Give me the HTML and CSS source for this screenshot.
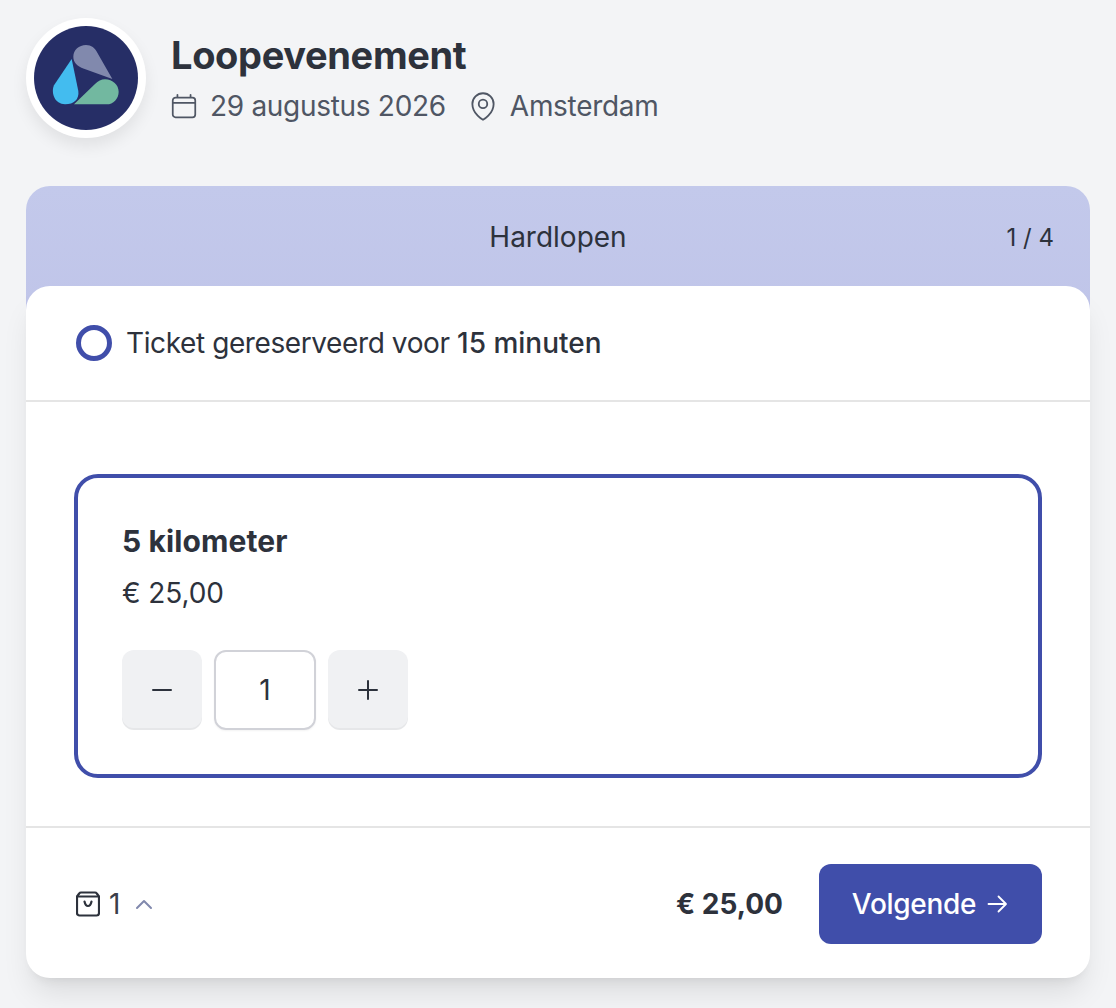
FILE: index.html
```html
<!DOCTYPE html>
<html lang="nl">

<head>
    <meta charset="UTF-8">
    <meta name="viewport" content="width=device-width, initial-scale=1.0">
    <title>Loopevenement</title>
    <link rel="stylesheet" href="styles.css">
</head>

<body>
    <header class="event">
        <div class="logo">
            <svg viewBox="0 0 312 312" width="104" height="104">
                <circle cx="156" cy="156" r="156" fill="#262e66" />
                <path d="M113 99 L60 178 C50 200 62 235 93 235 C120 235 136 220 133 195 Z" fill="#43bcef" />
                <path d="M235 159 L150 128 C128 120 118 108 118 92 C118 72 135 57 156 57 C172 57 183 66 190 80 Z" fill="#8189ad" />
                <path d="M120 235 L183 174 C192 165 202 160 213 160 C236 160 254 177 254 197 C254 218 238 235 218 235 Z" fill="#72b8a0" />
            </svg>
        </div>
        <div>
            <h1 class="event-title">Loopevenement</h1>
            <div class="event-meta">
                <svg class="icon-date" viewBox="0 0 24 24" width="30" height="32" fill="none" stroke="currentColor" stroke-width="1.400" stroke-linecap="round" stroke-linejoin="round">
                    <path d="M6.750 3v2.250M17.250 3v2.250M3 9.500h18M5.250 5.250h13.500A2.250 2.250 0 0 1 21 7.500v11.250A2.250 2.250 0 0 1 18.750 21H5.250A2.250 2.250 0 0 1 3 18.750V7.500a2.250 2.250 0 0 1 2.250-2.250Z" />
                </svg>
                <span class="meta-date">29 augustus 2026</span>
                <svg class="icon-place" viewBox="0 0 24 24" width="34" height="34" fill="none" stroke="currentColor" stroke-width="1.300" stroke-linecap="round" stroke-linejoin="round">
                    <path d="M15 10.500a3 3 0 1 1-6 0 3 3 0 0 1 6 0Z" />
                    <path d="M19.500 10.500c0 7.140-7.500 11.250-7.500 11.250S4.500 17.640 4.500 10.500a7.500 7.500 0 1 1 15 0Z" />
                </svg>
                <span>Amsterdam</span>
            </div>
        </div>
    </header>

    <main class="card">
        <div class="card-head">
            <span class="head-side"></span>
            <span class="head-title">Hardlopen</span>
            <span class="head-side head-step">1 / 4</span>
        </div>
        <div class="panel">
            <div class="timer">
                <span class="timer-ring"></span>
                <span class="timer-text">Ticket gereserveerd voor <span class="timer-time">15 minuten</span></span>
            </div>
            <div class="tickets">
                <div class="ticket">
                    <div class="ticket-name">5 kilometer</div>
                    <div class="ticket-price">€ 25,00</div>
                    <div class="qty">
                        <div class="qty-btn">
                            <svg viewBox="0 0 24 24" width="24" height="24" fill="none" stroke="#2d323c" stroke-width="2" stroke-linecap="round"><path d="M3 12h18" /></svg>
                        </div>
                        <div class="qty-input">1</div>
                        <div class="qty-btn">
                            <svg viewBox="0 0 24 24" width="24" height="24" fill="none" stroke="#2d323c" stroke-width="2" stroke-linecap="round"><path d="M3 12h18M12 3v18" /></svg>
                        </div>
                    </div>
                </div>
            </div>
            <div class="footer">
                <div class="cart">
                    <svg viewBox="0 0 24 28" width="24" height="28" fill="none" stroke="#2d323c" stroke-width="2.200" stroke-linecap="round" stroke-linejoin="round">
                        <path d="M5 2.500h14c.8 0 1.400.4 1.800 1L23 6.500v16.500a2.500 2.500 0 0 1-2.500 2.500h-17A2.500 2.500 0 0 1 1 23V6.500l2.200-3c.4-.6 1-1 1.800-1Z" />
                        <path d="M1.500 6.500h21M8.500 11.500c.6 3 2 4.500 3.500 4.500s2.900-1.500 3.500-4.500" />
                    </svg>
                    <span class="cart-count">1</span>
                    <svg class="cart-arrow" viewBox="0 0 18 12" width="18" height="12" fill="none" stroke="#8189ad" stroke-width="2" stroke-linecap="round" stroke-linejoin="round">
                        <path d="M2 10l7-7 7 7" />
                    </svg>
                </div>
                <div class="total">€ 25,00</div>
                <div class="next">
                    Volgende
                    <svg viewBox="0 0 24 24" width="24" height="24" fill="none" stroke="#fff" stroke-width="1.800" stroke-linecap="round" stroke-linejoin="round">
                        <path d="M3.500 12h17M13.500 4.500 21 12l-7.500 7.500" />
                    </svg>
                </div>
            </div>
        </div>
    </main>
</body>

</html>
```

FILE: styles.css
```css
* {
    box-sizing: border-box;
}

body {
    margin: 0;
    padding: 18px 26px 30px;
    background-color: #f3f4f6;
    color: #2d323c;
    font-family: Inter, "Liberation Sans", sans-serif;
}

.event {
    display: flex;
    gap: 25px;
    margin-bottom: 48px;
}

.logo {
    width: 120px;
    height: 120px;
    flex-shrink: 0;
    border-radius: 50%;
    background-color: white;
    display: flex;
    align-items: center;
    justify-content: center;
    box-shadow: 0 8px 16px rgba(0, 0, 0, 0.08);
}

.event-title {
    margin: 15px 0 0;
    font-size: 38px;
    line-height: 44px;
    font-weight: 700;
    letter-spacing: -0.35px;
}

.event-meta {
    display: flex;
    align-items: center;
    margin-top: 9px;
    color: #4f5664;
    font-size: 28px;
    line-height: 40px;
    letter-spacing: -0.3px;
}

.icon-date {
    margin-left: -2px;
    margin-right: 11px;
}

.meta-date {
    margin-right: 20px;
}

.icon-place {
    margin-right: 10px;
}

.card-head {
    height: 124px;
    padding: 0 36px 22px;
    display: flex;
    align-items: center;
    justify-content: space-between;
    background: linear-gradient(#c3c9eb, #c0c5e9);
    border-radius: 24px 24px 0 0;
}

.head-side {
    width: 100px;
}

.head-title {
    font-size: 28px;
    font-weight: 400;
}

.head-step {
    font-size: 24px;
    text-align: right;
}

.panel {
    position: relative;
    margin-top: -24px;
    background-color: white;
    border-radius: 24px;
    box-shadow: 0 20px 30px -6px rgba(0, 0, 0, 0.1), 0 8px 12px -8px rgba(0, 0, 0, 0.1);
}

.timer {
    height: 116px;
    padding: 0 48px 0 50px;
    display: flex;
    align-items: center;
    gap: 14px;
    border-bottom: 2px solid #e5e5e5;
}

.timer-ring {
    width: 36px;
    height: 36px;
    border: 5px solid #404eaa;
    border-radius: 50%;
}

.timer-text {
    font-size: 28px;
    letter-spacing: -0.4px;
}

.timer-time {
    font-weight: 500;
    letter-spacing: 0;
}

.tickets {
    padding: 72px 48px 48px;
    border-bottom: 2px solid #e5e5e5;
}

.ticket {
    height: 304px;
    padding: 43px 44px;
    border: 4px solid #404eaa;
    border-radius: 24px;
}

.ticket-name {
    font-size: 30px;
    line-height: 40px;
    font-weight: 700;
    letter-spacing: 0.1px;
}

.ticket-price {
    margin-top: 12px;
    font-size: 28px;
    line-height: 40px;
    letter-spacing: -0.1px;
}

.qty {
    display: flex;
    gap: 12px;
    margin-top: 37px;
}

.qty-btn {
    width: 80px;
    height: 80px;
    display: flex;
    align-items: center;
    justify-content: center;
    background-color: #f0f1f3;
    border-radius: 12px;
    box-shadow: inset 0 -2px 0 rgba(0, 0, 0, 0.04);
}

.qty-input {
    width: 102px;
    height: 80px;
    display: flex;
    align-items: center;
    justify-content: center;
    font-size: 28px;
    border: 2px solid #d1d2d8;
    border-radius: 12px;
    box-shadow: 0 1px 2px rgba(0, 0, 0, 0.05);
}

.footer {
    height: 150px;
    padding: 2px 48px 0 50px;
    display: flex;
    align-items: center;
}

.cart {
    display: flex;
    align-items: center;
    margin-right: auto;
}

.cart-count {
    margin-left: 9px;
    font-size: 28px;
    color: #3a3f4a;
}

.cart-arrow {
    margin-left: 15px;
}

.total {
    margin-right: 36px;
    font-size: 28px;
    font-weight: 700;
}

.next {
    width: 223px;
    height: 80px;
    display: flex;
    align-items: center;
    justify-content: center;
    gap: 9px;
    color: white;
    background-color: #404eaa;
    border-radius: 12px;
    font-size: 28px;
    font-weight: 500;
    letter-spacing: -0.3px;
}
```
